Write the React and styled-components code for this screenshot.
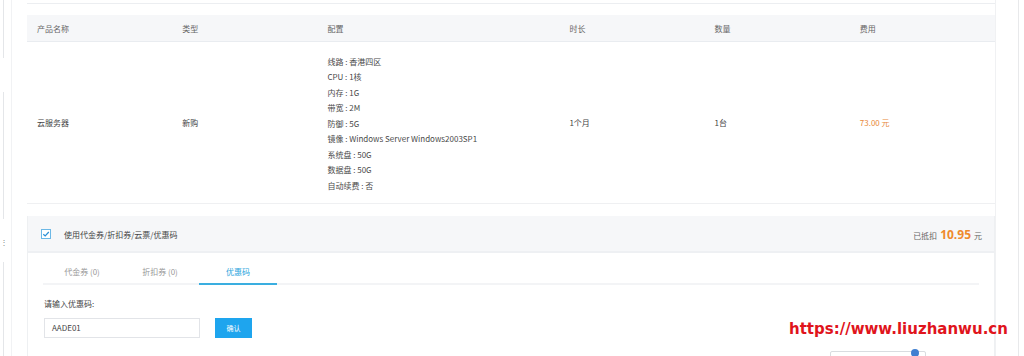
import React from "react";
import styled, { createGlobalStyle } from "styled-components";

const GlobalStyle = createGlobalStyle`
  html, body {
    margin: 0;
    padding: 0;
    background: #fff;
    font-family: "Noto Sans CJK SC", "Noto Sans", sans-serif;
    color: #444;
  }
  * { box-sizing: border-box; }
`;

const Page = styled.div`
  position: relative;
  display: flex;
  width: 1024px;
  height: 356px;
  overflow: hidden;
`;

const Side = styled.div`
  width: 12px;
  display: flex;
  flex-direction: column;
  border-right: 1px solid #f1f2f4;
  padding-left: 3px;
`;

const SideLine = styled.div`
  width: 1px;
  height: ${(p) => p.h}px;
  margin-bottom: ${(p) => p.gap}px;
  background: #e4e6e9;
`;

const SideDots = styled.div`
  margin-left: -3px;
  height: 12px;
  margin-bottom: 14px;
  font-size: 8px;
  line-height: 12px;
  color: #888;
`;

const Main = styled.div`
  flex: 1;
  padding: 0 0 0 15px;
  display: flex;
`;

const Content = styled.div`
  width: 968px;
  display: flex;
  flex-direction: column;
`;

const RightRail = styled.div`
  width: 24px;
  border-left: 1px solid #f0f1f3;
  border-right: 1px solid #e8e9eb;
`;

const TopCard = styled.div`
  height: 4px;
  border-bottom: 1px solid #eceef1;
  margin-bottom: 11px;
`;

const Row = styled.div`
  display: grid;
  grid-template-columns: 15fr 15fr 25fr 15fr 15fr 15fr;
  align-items: center;
  font-size: 8px;
  background: ${(p) => (p.head ? "#f6f7f9" : "#fff")};
  border-bottom: 1px solid ${(p) => (p.head ? "#e9ecf0" : "#eff0f2")};
  height: ${(p) => p.h}px;
  color: ${(p) => (p.head ? "#666" : "#444")};
`;

const Cell = styled.div`
  padding-left: 10px;
  color: ${(p) => p.color || "inherit"};
`;

const Specs = styled.div`
  display: flex;
  flex-direction: column;
  padding-left: 10px;
  padding-top: 2px;
`;

const Spec = styled.div`
  height: 15.5px;
  line-height: 15.5px;
  color: #4a4a4a;
`;

const Coupon = styled.div`
  margin-top: 12px;
  border-left: 1px solid #eef0f2;
  border-right: 1px solid #eef0f2;
  flex: 1;
`;

const CouponHead = styled.div`
  height: 37px;
  background: #f6f7f9;
  border-bottom: 2px solid #eef0f3;
  display: flex;
  align-items: center;
  padding: 1px 12px 0 13px;
  font-size: 8px;
`;

const Check = styled.span`
  width: 10px;
  height: 10px;
  border: 1px solid #6cb8e6;
  background: #fff;
  display: inline-flex;
  align-items: center;
  justify-content: center;
  margin-right: 13px;
`;

const HeadText = styled.span`
  flex: 1;
  color: #444;
`;

const Saved = styled.span`
  color: #666;
  display: flex;
  align-items: baseline;
`;

const Amount = styled.b`
  color: #ef8a2d;
  font-size: 12px;
  font-weight: 700;
  margin: 0 3px;
  font-family: "Open Sans", "Noto Sans", sans-serif;
`;

const CouponBody = styled.div`
  padding: 0 15px;
`;

const Tabs = styled.div`
  display: flex;
  margin-top: 8px;
  border-bottom: 2px solid #f3f4f6;
`;

const Tab = styled.div`
  width: 78px;
  height: 24px;
  line-height: 22px;
  text-align: center;
  font-size: 8px;
  color: ${(p) => (p.active ? "#2aa4dc" : "#999")};
  border-bottom: 2px solid ${(p) => (p.active ? "#3aaee0" : "transparent")};
  margin-bottom: -2px;
`;

const Label = styled.div`
  font-size: 8px;
  color: #444;
  margin: 13px 0 0 1px;
  line-height: 12px;
`;

const Form = styled.div`
  display: flex;
  align-items: center;
  margin-top: 8px;
`;

const Input = styled.div`
  width: 156px;
  height: 20px;
  border: 1px solid #e2e4e8;
  font-size: 8px;
  line-height: 18px;
  padding-left: 7px;
  color: #444;
  margin-left: 1px;
`;

const Button = styled.div`
  width: 37px;
  height: 20px;
  background: #1ea5ee;
  color: #fff;
  font-size: 7px;
  line-height: 20px;
  text-align: center;
  margin-left: 15px;
`;

const Watermark = styled.div`
  position: absolute;
  left: 789px;
  top: 320px;
  font-family: "DejaVu Sans", sans-serif;
  font-weight: 700;
  font-size: 15px;
  letter-spacing: 0;
  color: #e0141c;
`;

const Floater = styled.div`
  position: absolute;
  left: 830px;
  top: 351px;
  width: 96px;
  height: 12px;
  border: 1px solid #d9dce0;
  border-radius: 2px;
  background: #fff;
`;

const FloaterDot = styled.span`
  position: absolute;
  right: 6px;
  top: -3px;
  width: 8px;
  height: 8px;
  border-radius: 50%;
  background: #3f7fd1;
`;

const specs = [
  "线路 : 香港四区",
  "CPU : 1核",
  "内存 : 1G",
  "带宽 : 2M",
  "防御 : 5G",
  "镜像 : Windows Server Windows2003SP1",
  "系统盘 : 50G",
  "数据盘 : 50G",
  "自动续费 : 否",
];

export default function App() {
  return (
    <>
      <GlobalStyle />
      <Page>
        <Side>
          <SideLine h={62} gap={34} />
          <SideLine h={136} gap={17} />
          <SideDots>⋮</SideDots>
          <SideLine h={100} gap={0} />
        </Side>
        <Main>
          <Content>
            <TopCard />
            <Row head h={27}>
              <Cell>产品名称</Cell>
              <Cell>类型</Cell>
              <Cell>配置</Cell>
              <Cell>时长</Cell>
              <Cell>数量</Cell>
              <Cell>费用</Cell>
            </Row>
            <Row h={162}>
              <Cell>云服务器</Cell>
              <Cell>新购</Cell>
              <Specs>
                {specs.map((s) => (
                  <Spec key={s}>{s}</Spec>
                ))}
              </Specs>
              <Cell>1个月</Cell>
              <Cell>1台</Cell>
              <Cell color="#e8893a">73.00 元</Cell>
            </Row>
            <Coupon>
              <CouponHead>
                <Check>
                  <svg width="8" height="8" viewBox="0 0 8 8">
                    <path
                      d="M1.3 4.2 L3.2 6 L6.8 2"
                      fill="none"
                      stroke="#2a8fd6"
                      strokeWidth="1.2"
                    />
                  </svg>
                </Check>
                <HeadText>使用代金券/折扣券/云票/优惠码</HeadText>
                <Saved>
                  已抵扣<Amount>10.95</Amount>元
                </Saved>
              </CouponHead>
              <CouponBody>
                <Tabs>
                  <Tab>代金券 (0)</Tab>
                  <Tab>折扣券 (0)</Tab>
                  <Tab active>优惠码</Tab>
                </Tabs>
                <Label>请输入优惠码:</Label>
                <Form>
                  <Input>AADE01</Input>
                  <Button>确认</Button>
                </Form>
              </CouponBody>
            </Coupon>
          </Content>
          <RightRail />
        </Main>
        <Watermark>https://www.liuzhanwu.cn</Watermark>
        <Floater>
          <FloaterDot />
        </Floater>
      </Page>
    </>
  );
}
